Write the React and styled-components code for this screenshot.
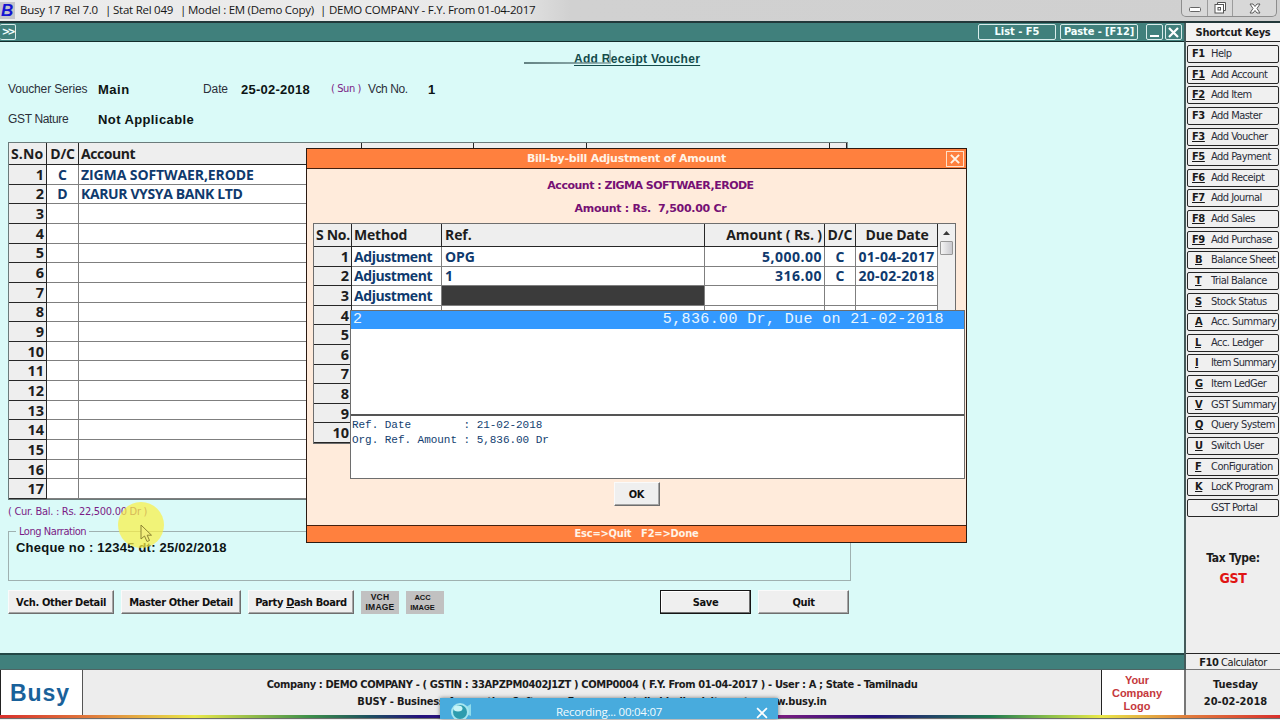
import React from "react";
import styled, { createGlobalStyle, css } from "styled-components";

const tahoma = '"DejaVu Sans Condensed", "DejaVu Sans", sans-serif';
const wide = '"DejaVu Sans", sans-serif';
const segoe = '"Open Sans", "Noto Sans", sans-serif';
const arial = '"Liberation Sans", Arial, sans-serif';
const mono = '"Liberation Mono", "Courier New", monospace';

const Global = createGlobalStyle`
  * { box-sizing: border-box; }
  body { margin: 0; overflow: hidden; background: #ededed; color: #1b1b1b; font-family: ${tahoma}; }
`;

const Screen = styled.div`
  position: relative;
  width: 1280px;
  height: 720px;
  overflow: hidden;
  display: flex;
  flex-direction: column;
  background: #ededed;
  white-space: pre;
`;

const Run = styled.span`
  letter-spacing: ${(p) => p.$ls ?? 0}px;
`;

/* ---------- title bar ---------- */
const TitleBar = styled.header`
  flex: 0 0 23px;
  display: flex;
  align-items: flex-start;
  background: linear-gradient(90deg, #ececec 0, #e9e9e9 500px, #d1d1d1 570px, #d0d0d0 100%);
  border-bottom: 2px solid #22383a;
`;
const AppIcon = styled.div`
  width: 15px;
  height: 17px;
  margin-top: 2px;
  margin-right: 5px;
  background: #c4c4cb;
  color: #1414d2;
  font: italic 900 17px/17px ${arial};
  padding-left: 1px;
`;
const TitlePart = styled.span`
  width: ${(p) => p.$w}px;
  font: 11.5px/20px ${segoe};
  letter-spacing: -0.25px;
  color: #161616;
`;
const WindowControls = styled.div`
  margin-left: auto;
  margin-right: 3px;
  width: 96px;
  height: 17px;
  display: grid;
  grid-template-columns: 26px 25px 1fr;
  border: 1px solid #8d8d8d;
  border-top: 0;
  border-radius: 0 0 5px 5px;
  background: #d8d8d8;
`;
const WindowControl = styled.div`
  display: flex;
  align-items: center;
  justify-content: center;
  border-right: 1px solid #9c9c9c;
  &:last-child { border-right: 0; }
`;

/* ---------- work area ---------- */
const Middle = styled.div`
  flex: 0 0 647px;
  display: flex;
`;
const Main = styled.main`
  width: 1184px;
  display: flex;
  flex-direction: column;
`;
const Toolbar = styled.div`
  flex: 0 0 19px;
  display: flex;
  align-items: center;
  justify-content: space-between;
  padding-right: 2px;
  background: #40807c;
  border-bottom: 1px solid #122c2b;
`;
const ToolGroup = styled.div`
  display: flex;
`;
const ToolButton = styled.div`
  width: ${(p) => p.$w}px;
  height: 16px;
  margin-left: ${(p) => p.$gap ?? 0}px;
  display: flex;
  align-items: center;
  justify-content: center;
  border: 1px solid #d9eceb;
  border-left-width: ${(p) => (p.$flush ? 0 : 1)}px;
  border-radius: 2px;
  color: #f4ffff;
  font: bold 11px/14px ${tahoma};
  letter-spacing: ${(p) => p.$ls ?? 0}px;
`;
const Form = styled.section`
  flex: 0 0 611px;
  position: relative;
  display: flex;
  flex-direction: column;
  padding: 9px 0 0 8px;
  background: #dafaf8;
`;
const FormTitle = styled.h1`
  margin: 0;
  height: 18px;
  padding-left: 566px;
  font: bold 12px/17px ${arial};
  letter-spacing: 0.3px;
  color: #134b4b;
  text-decoration: underline;
  text-underline-offset: 2px;
`;
const Smear = styled.div`
  position: absolute;
  left: 524px;
  top: 8px;
  width: 87px;
  height: 14px;
  border-bottom: 2px solid #5f7f80;
  border-image: linear-gradient(90deg, #456465, #8aa8a9) 1;
  border-left: 0;
  border-top: 0;
  border-right: 2px solid #8aa8a9;
  opacity: 0.8;
  clip-path: polygon(0 84%, 97% 84%, 97% 0, 100% 0, 100% 100%, 0 100%);
`;
const FieldRow = styled.div`
  display: flex;
  align-items: center;
  height: 30px;
  margin-top: ${(p) => p.$top ?? 0}px;
`;
const Label = styled.span`
  width: ${(p) => p.$w}px;
  font: 12px/16px ${arial};
  letter-spacing: ${(p) => p.$ls ?? -0.1}px;
  color: #2b2f3a;
`;
const Weekday = styled.span`
  width: 37px;
  font: 11px/16px ${tahoma};
  letter-spacing: -0.4px;
  color: #7b1c86;
`;
const Value = styled.span`
  width: ${(p) => p.$w}px;
  padding-top: 1px;
  font: bold 13px/16px ${arial};
  letter-spacing: ${(p) => p.$ls ?? 0.4}px;
  color: #0c1414;
`;

/* ---------- grids ---------- */
const VoucherGrid = styled.div`
  width: 840px;
  height: 358px;
  margin-top: 8px;
  display: grid;
  grid-template-columns: 38px 32px 283px 112px 113px 243px 1fr;
  grid-template-rows: 22px repeat(17, 1fr);
  border: 1px solid #6b7b7b;
  border-right-color: #8c9999;
  background: #fff;
`;
const Cell = styled.div`
  min-width: 0;
  min-height: 0;
  overflow: hidden;
  display: flex;
  align-items: center;
  justify-content: ${(p) => p.$align ?? "flex-start"};
  padding: ${(p) => (p.$title ? 0 : 1)}px 2px 0 ${(p) => (p.$tight ? 2 : 3)}px;
  border-right: 1px solid #7f7f7f;
  border-bottom: 1px solid #7f7f7f;
  font: bold 14px/18px ${segoe};
  letter-spacing: ${(p) => p.$ls ?? -0.1}px;
  color: #0f3a6d;
  ${(p) =>
    (p.$title || p.$number) &&
    css`
      background: #eeeeee;
      color: #1d1d1d;
      border-color: #262626;
    `}
  ${(p) =>
    p.$number &&
    css`
      justify-content: flex-end;
      font-size: 14.5px;
      letter-spacing: 0;
    `}
  ${(p) =>
    p.$dark &&
    css`
      background: #3b3b3b;
    `}
`;

/* ---------- lower form ---------- */
const Balance = styled.div`
  height: 21px;
  padding-top: 2px;
  font: 11px/20px ${tahoma};
  letter-spacing: -0.29px;
  color: #7b1c86;
`;
const Narration = styled.fieldset`
  width: 843px;
  height: 56px;
  margin: 4px 0 0;
  padding: 2px 7px 0;
  border: 1px solid #9fb1b0;
  font: bold 13px/16px ${arial};
  letter-spacing: 0.22px;
  color: #0c1414;
  legend {
    padding: 0 3px;
    font: 11px/13px ${tahoma};
    letter-spacing: -0.45px;
    color: #7b1c86;
  }
`;
const Actions = styled.div`
  display: flex;
  gap: 7px;
  margin-top: 9px;
`;
const ActionButton = styled.div`
  width: ${(p) => p.$w}px;
  height: 24px;
  margin-left: ${(p) => p.$push ?? 0}px;
  display: flex;
  align-items: center;
  justify-content: center;
  padding-top: 1px;
  background: #efefef;
  border: 1px solid;
  border-color: #fafafa #6e6e6e #6e6e6e #fafafa;
  box-shadow: inset -1px -1px 0 #a5a5a5;
  font: bold 11px/14px ${tahoma};
  letter-spacing: -0.36px;
  color: #111;
  ${(p) =>
    p.$focus &&
    css`
      border-color: #151515;
      box-shadow: inset -1px -1px 0 #6e6e6e, inset 1px 1px 0 #fff;
    `}
`;
const ImageButton = styled.div`
  width: 38px;
  height: 23px;
  margin-top: 1px;
  display: flex;
  flex-direction: column;
  align-items: center;
  background: #c1c1c1;
  font: bold ${(p) => (p.$small ? 7.5 : 8.5)}px/9.5px ${arial};
  padding: 2px ${(p) => (p.$small ? 5 : 0)}px 0 0;
  letter-spacing: ${(p) => p.$ls ?? 0}px;
  color: #151515;
`;
const StatusStrip = styled.div`
  flex: 0 0 17px;
  background: #40807c;
  border-top: 2px solid #234746;
  border-bottom: 1px solid #4f6463;
`;

/* ---------- sidebar ---------- */
const Sidebar = styled.aside`
  flex: 1;
  display: flex;
  flex-direction: column;
  align-items: center;
  border-left: 2px solid #445a5a;
  background: #eeeeee;
`;
const SideTitle = styled.div`
  width: 100%;
  flex: 0 0 19px;
  height: 19px;
  border-bottom: 1px solid #222;
  background: #f3f3f3;
  text-align: center;
  font: bold 11px/20px ${tahoma};
  letter-spacing: -0.25px;
  min-height: 0;
`;
const Keys = styled.div`
  width: 92px;
  height: 472px;
  margin-top: 3px;
  display: flex;
  flex-direction: column;
  justify-content: space-between;
`;
const KeyButton = styled.div`
  height: 18px;
  display: flex;
  align-items: center;
  border: 1px solid #262626;
  border-radius: 2px;
  background: #f0f0f0;
  font: 11px/16px ${tahoma};
  letter-spacing: ${(p) => (p.$long ? -0.72 : -0.53)}px;
  color: #2a2d38;
`;
const KeyChar = styled.b`
  width: ${(p) => (p.$wide ? 16 : 13)}px;
  margin-left: ${(p) => (p.$wide ? 4 : 7)}px;
  letter-spacing: -0.4px;
  color: #191919;
  text-underline-offset: 1px;
  text-decoration: ${(p) => (p.$underline ? "underline" : "none")};
`;
const KeyLabel = styled.span`
  margin-left: ${(p) => (p.$bare ? 23 : 3)}px;
`;
const TaxType = styled.div`
  margin-top: 31px;
  text-align: center;
  font: bold 12px/20px ${tahoma};
  letter-spacing: -0.3px;
`;
const TaxName = styled.div`
  color: #e01414;
  font-size: 14px;
`;
const Calculator = styled.div`
  margin-top: auto;
  width: 100%;
  height: 17px;
  border-top: 1px solid #262626;
  border-bottom: 1px solid #777;
  text-align: center;
  font: 11px/17px ${tahoma};
  letter-spacing: -0.45px;
`;

/* ---------- footer ---------- */
const Footer = styled.footer`
  flex: 0 0 45px;
  height: 45px;
  display: flex;
`;
const Brand = styled.div`
  width: 83px;
  height: 45px;
  padding: 2px 0 0 9px;
  border-left: 1px solid #222;
  border-right: 1px solid #555;
  background: #fff;
  color: #19619a;
  font: bold 23px/43px ${arial};
  letter-spacing: 0.9px;
`;
const Company = styled.div`
  flex: 1;
  text-align: center;
  padding-top: 6px;
  font: bold 11px/17px ${tahoma};
`;
const LogoBox = styled.div`
  width: 84px;
  padding: 4px 12px 0 0;
  border-left: 1px solid #222;
  border-right: 1px solid #777;
  background: #fff;
  color: #c5383c;
  text-align: center;
  font: bold 11px/13px ${arial};
`;
const Today = styled.div`
  width: 95px;
  padding: 6px 0 0 5px;
  border-left: 1px solid #777;
  text-align: center;
  font: bold 11px/17px ${tahoma};
`;
const Rainbow = styled.div`
  flex: 0 0 4px;
  background: linear-gradient(90deg, #d9302c 0, #e07a3c 90px, #e9e84a 195px, #3c8f4a 310px, #1d4f60 370px, #25127c 420px, #5b1a86 700px, #7a1c80 780px, #25127c 875px, #1d7a50 990px, #8cc04a 1050px, #e9e84a 1100px, #e07a3c 1190px, #d9302c 1280px);
  border-bottom: 1px solid #6d6d6d;
`;

/* ---------- dialog ---------- */
const Dialog = styled.div`
  position: absolute;
  left: 306px;
  top: 148px;
  width: 661px;
  height: 395px;
  display: flex;
  flex-direction: column;
  border: 1px solid #2b1a12;
  background: #ffebdb;
`;
const DialogBar = styled.div`
  flex: 0 0 20px;
  display: flex;
  align-items: center;
  justify-content: flex-end;
  padding-right: 2px;
  background: #ff803e;
  border-bottom: 1px solid #43200f;
  color: #fff3e6;
  font: bold 11px/18px ${wide};
  letter-spacing: -0.24px;
`;
const DialogName = styled.div`
  flex: 1;
  text-align: center;
`;
const CloseBox = styled.div`
  width: 18px;
  height: 16px;
  display: flex;
  align-items: center;
  justify-content: center;
  border: 1px solid #ffe0c8;
`;
const DialogFacts = styled.div`
  flex: 0 0 54px;
  padding: 5px 0 0 28px;
  text-align: center;
  font: bold 11px/23px ${wide};
  color: #761074;
`;
const BillGrid = styled.div`
  width: 643px;
  height: 221px;
  margin-left: 6px;
  display: grid;
  grid-template-columns: 38px 90px 263px 120px 31px 82px 1fr;
  grid-template-rows: 23px repeat(10, 1fr);
  border: 1px solid #6e6e6e;
  background: #fff;
`;
const ScrollTrack = styled.div`
  grid-column: 7;
  grid-row: 1 / span 11;
  display: flex;
  flex-direction: column;
  align-items: center;
  padding-top: 7px;
  background: #f0f0f0;
`;
const ScrollThumb = styled.div`
  width: 13px;
  height: 14px;
  margin-top: 6px;
  border: 1px solid #989898;
  border-radius: 1px;
  background: linear-gradient(90deg, #f4f4f4, #c9c9ce);
`;
const DialogBody = styled.div`
  flex: 1;
  display: flex;
  justify-content: center;
  align-items: flex-start;
  padding-top: 38px;
`;
const DialogFoot = styled.div`
  flex: 0 0 17px;
  background: #ff803e;
  border-top: 1px solid #43200f;
  color: #fff3e6;
  text-align: center;
  font: bold 11px/15px ${tahoma};
  letter-spacing: -0.2px;
`;
const RefList = styled.div`
  position: absolute;
  left: 43px;
  top: 161px;
  width: 615px;
  height: 169px;
  display: flex;
  flex-direction: column;
  border: 1px solid #6e6e6e;
  background: #fff;
`;
const RefChoice = styled.div`
  flex: 0 0 17px;
  display: flex;
  justify-content: space-between;
  padding: 0 20px 0 2px;
  background: #3399ff;
  color: #e8f6ff;
  font: 15px/18px ${mono};
  letter-spacing: 0.37px;
`;
const RefDetails = styled.div`
  margin-top: 85px;
  flex: 1;
  border-top: 2px solid #555;
  font: 11px/15px ${mono};
  letter-spacing: -0.04px;
  color: #123e70;
  padding: 2px 0 0 1px;
`;

/* ---------- floating overlays ---------- */
const ClickHalo = styled.div`
  position: absolute;
  left: 118px;
  top: 502px;
  width: 46px;
  height: 46px;
  border-radius: 50%;
  background: rgba(250, 240, 70, 0.72);
`;
const Pointer = styled.svg`
  position: absolute;
  left: 22px;
  top: 22px;
`;
const Recorder = styled.div`
  position: absolute;
  left: 440px;
  top: 698px;
  width: 338px;
  height: 21px;
  display: flex;
  align-items: flex-start;
  justify-content: space-between;
  overflow: hidden;
  padding: 4px 10px 0 10px;
  background: #48abdd;
  box-shadow: 0 0 4px rgba(0, 0, 0, 0.5);
  color: #f2fbff;
  font: 11.5px/20px ${segoe};
  letter-spacing: -0.25px;
`;
const RecorderTime = styled.span`
  margin-right: 12px;
`;
const RecorderClose = styled.div`
  padding-top: 5px;
  line-height: 0;
`;

const Cross = ({ size = 11, width = 2.2, color = "#fff" }) => (
  <svg width={size} height={size} viewBox="0 0 11 11">
    <path d="M1 1L10 10M10 1L1 10" stroke={color} strokeWidth={width} />
  </svg>
);

const shortcuts = [
  ["F1", "Help", false], ["F1", "Add Account", true], ["F2", "Add Item", true],
  ["F3", "Add Master", false], ["F3", "Add Voucher", true], ["F5", "Add Payment", true],
  ["F6", "Add Receipt", true], ["F7", "Add Journal", true], ["F8", "Add Sales", true],
  ["F9", "Add Purchase", true], ["B", "Balance Sheet", true], ["T", "Trial Balance", true],
  ["S", "Stock Status", true], ["A", "Acc. Summary", true], ["L", "Acc. Ledger", true],
  ["I", "Item Summary", true], ["G", "Item LedGer", true], ["V", "GST Summary", true],
  ["Q", "Query System", true], ["U", "Switch User", true], ["F", "ConFiguration", true],
  ["K", "LocK Program", true], ["", "GST Portal", false],
];

const entries = [
  { dc: "C", account: "ZIGMA SOFTWAER,ERODE", ls: -0.1 },
  { dc: "D", account: "KARUR VYSYA BANK LTD", ls: -0.38 },
];
const bills = [
  ["Adjustment", "OPG", "5,000.00", "C", "01-04-2017"],
  ["Adjustment", "1", "316.00", "C", "20-02-2018"],
  ["Adjustment", "", "", "", ""],
];

function Vouchers() {
  return (
    <VoucherGrid>
      <Cell $title $tight $ls={0.1}>S.No</Cell>
      <Cell $title $tight $align="center" $ls={-0.2}>D/C</Cell>
      <Cell $title $tight $ls={-0.45}>Account</Cell>
      <Cell $title $align="flex-end">Debit ( Rs. )</Cell>
      <Cell $title $align="flex-end">Credit ( Rs. )</Cell>
      <Cell $title>Short Narration</Cell>
      <Cell $title />
      {Array.from({ length: 17 }, (_, i) => (
        <React.Fragment key={i}>
          <Cell $number>{i + 1}</Cell>
          <Cell $tight $align="center">{entries[i]?.dc}</Cell>
          <Cell $tight $ls={entries[i]?.ls}>{entries[i]?.account}</Cell>
          <Cell /><Cell /><Cell /><Cell />
        </React.Fragment>
      ))}
    </VoucherGrid>
  );
}

function BillDialog() {
  return (
    <Dialog>
      <DialogBar>
        <DialogName>Bill-by-bill Adjustment of Amount</DialogName>
        <CloseBox><Cross size={10} color="#fff3e6" /></CloseBox>
      </DialogBar>
      <DialogFacts>
        <div><Run $ls={-0.5}>Account : ZIGMA SOFTWAER,ERODE</Run></div>
        <div><Run $ls={-0.28}>Amount : Rs.  7,500.00 Cr</Run></div>
      </DialogFacts>
      <BillGrid>
        <Cell $title $tight $ls={-0.3}>S No.</Cell>
        <Cell $title $tight $ls={-0.2}>Method</Cell>
        <Cell $title>Ref.</Cell>
        <Cell $title $align="flex-end">Amount ( Rs. )</Cell>
        <Cell $title $tight $align="center">D/C</Cell>
        <Cell $title $align="center" $ls={-0.2}>Due Date</Cell>
        <ScrollTrack>
          <svg width="7" height="4"><path d="M0 4L3.5 0L7 4Z" fill="#3a3a3a" /></svg>
          <ScrollThumb />
        </ScrollTrack>
        {Array.from({ length: 10 }, (_, i) => {
          const [method, ref, amount, dc, due] = bills[i] ?? [];
          return (
            <React.Fragment key={i}>
              <Cell $number>{i + 1}</Cell>
              <Cell $tight $ls={-0.42}>{method}</Cell>
              <Cell $dark={i === 2}>{ref}</Cell>
              <Cell $align="flex-end" $ls={0.5}>{amount}</Cell>
              <Cell $tight $align="center">{dc}</Cell>
              <Cell $tight $align="center" $ls={0.3}>{due}</Cell>
            </React.Fragment>
          );
        })}
      </BillGrid>
      <DialogBody>
        <ActionButton $w={46}>OK</ActionButton>
      </DialogBody>
      <DialogFoot>Esc=&gt;Quit   F2=&gt;Done</DialogFoot>
      <RefList>
        <RefChoice><span>2</span><span>5,836.00 Dr, Due on 21-02-2018</span></RefChoice>
        <RefDetails>
          <div>Ref. Date        : 21-02-2018</div>
          <div>Org. Ref. Amount : 5,836.00 Dr</div>
        </RefDetails>
      </RefList>
    </Dialog>
  );
}

export default function App() {
  return (
    <Screen>
      <Global />
      <TitleBar>
        <AppIcon>B</AppIcon>
        <TitlePart $w={44}>Busy 17</TitlePart>
        <TitlePart $w={41}>Rel 7.0</TitlePart>
        <TitlePart $w={8}>|</TitlePart>
        <TitlePart $w={67}>Stat Rel 049</TitlePart>
        <TitlePart $w={8}>|</TitlePart>
        <TitlePart $w={132}>Model : EM (Demo Copy)</TitlePart>
        <TitlePart $w={9}>|</TitlePart>
        <TitlePart $w={220}>DEMO COMPANY - F.Y. From 01-04-2017</TitlePart>
        <WindowControls>
          <WindowControl>
            <svg width="12" height="16"><rect x="0.5" y="7.5" width="11" height="4" rx="1" fill="#fff" stroke="#666" /></svg>
          </WindowControl>
          <WindowControl>
            <svg width="13" height="13" fill="#fff" stroke="#555">
              <path d="M3.500 0.500H11.500V8.500H9.500M3.500 0.500V2.500" />
              <rect x="1" y="2.500" width="8.500" height="8.500" />
              <rect x="4" y="5.500" width="2.500" height="2.500" />
            </svg>
          </WindowControl>
          <WindowControl>
            <svg width="12" height="11">
              <path d="M1 1H4L6 3.500L8 1H11L8 5.500L11 10H8L6 7.500L4 10H1L4 5.500Z" fill="#fff" stroke="#5c5c5c" />
            </svg>
          </WindowControl>
        </WindowControls>
      </TitleBar>

      <Middle>
        <Main>
          <Toolbar>
            <ToolButton $w={16} $ls={-2.6} $flush>&gt;&gt;</ToolButton>
            <ToolGroup>
              <ToolButton $w={78}>List - F5</ToolButton>
              <ToolButton $w={78} $gap={4} $ls={-0.1}>Paste - [F12]</ToolButton>
              <ToolButton $w={17} $gap={8}>
                <svg width="9" height="12"><path d="M0 10H9" stroke="#fff" strokeWidth="2" /></svg>
              </ToolButton>
              <ToolButton $w={17} $gap={2}><Cross /></ToolButton>
            </ToolGroup>
          </Toolbar>
          <Form>
            <FormTitle>Add Receipt Voucher</FormTitle>
            <Smear />
            <FieldRow $top={5}>
              <Label $w={90} $ls={-0.15}>Voucher Series</Label>
              <Value $w={105} $ls={0.5}>Main</Value>
              <Label $w={38}>Date</Label>
              <Value $w={90} $ls={0.25}>25-02-2018</Value>
              <Weekday>( Sun )</Weekday>
              <Label $w={60} $ls={-0.45}>Vch No.</Label>
              <Value $w={20}>1</Value>
            </FieldRow>
            <FieldRow>
              <Label $w={90} $ls={-0.35}>GST Nature</Label>
              <Value $w={120}>Not Applicable</Value>
            </FieldRow>
            <Vouchers />
            <Balance>( Cur. Bal. : Rs. 22,500.00 Dr )</Balance>
            <Narration>
              <legend>Long Narration</legend>
              Cheque no : 12345 dt: 25/02/2018
            </Narration>
            <Actions>
              <ActionButton $w={106}>Vch. Other Detail</ActionButton>
              <ActionButton $w={120}>Master Other Detail</ActionButton>
              <ActionButton $w={106}><span>Party <u>D</u>ash Board</span></ActionButton>
              <ImageButton $ls={0.2}><span>VCH</span><span>IMAGE</span></ImageButton>
              <ImageButton $small><span>ACC</span><span>IMAGE</span></ImageButton>
              <ActionButton $w={91} $push={209} $focus>Save</ActionButton>
              <ActionButton $w={91}>Quit</ActionButton>
            </Actions>
          </Form>
          <StatusStrip />
        </Main>
        <Sidebar>
          <SideTitle>Shortcut Keys</SideTitle>
          <Keys>
            {shortcuts.map(([k, label, u]) => (
              <KeyButton key={k + label} $long={label === "Item Summary"}>
                {k && <KeyChar $wide={k.length > 1} $underline={u}>{k}</KeyChar>}
                <KeyLabel $bare={!k}>{label}</KeyLabel>
              </KeyButton>
            ))}
          </Keys>
          <TaxType>Tax Type:<TaxName>GST</TaxName></TaxType>
          <Calculator><b>F10</b> Calculator</Calculator>
        </Sidebar>
      </Middle>

      <Footer>
        <Brand>Busy</Brand>
        <Company>
          <div><Run $ls={-0.37}>Company : DEMO COMPANY - ( GSTIN : 33APZPM0402J1ZT ) COMP0004 ( F.Y. From 01-04-2017 ) - User : A ; State - Tamilnadu</Run></div>
          <div><Run $ls={-0.19}>BUSY - Business Accounting Software. For more details kindly visit us at : www.busy.in</Run></div>
        </Company>
        <LogoBox>
          <div>Your</div>
          <div>Company</div>
          <div>Logo</div>
        </LogoBox>
        <Today>
          <div>Tuesday</div>
          <div>20-02-2018</div>
        </Today>
      </Footer>
      <Rainbow />

      <ClickHalo>
        <Pointer width="14" height="20" viewBox="0 0 14 20">
          <path d="M1 1V15L4.500 12L7 17.500L9.500 16.500L7.200 11.200H11.500Z" fill="#f2ee7c" stroke="#8d8433" />
        </Pointer>
      </ClickHalo>
      <BillDialog />
      <Recorder>
        <svg width="24" height="20" viewBox="0 0 24 20">
          <path d="M16 5L21 2V14L16 12Z" fill="#8fdcec" />
          <circle cx="10" cy="10" r="9" fill="#a6e6f0" />
          <circle cx="10" cy="10" r="7" fill="#2d9cae" />
          <ellipse cx="8" cy="6.500" rx="4.500" ry="3" fill="#c8f4f7" />
        </svg>
        <RecorderTime>Recording... 00:04:07</RecorderTime>
        <RecorderClose><Cross size={12} width={1.6} /></RecorderClose>
      </Recorder>
    </Screen>
  );
}
